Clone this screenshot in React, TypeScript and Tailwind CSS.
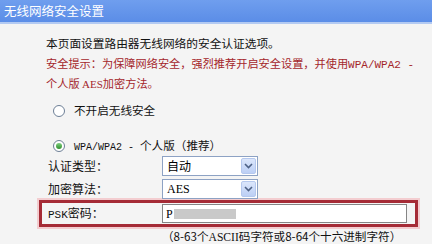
export default function App() {
  const cjk = "font-['Noto_Sans_CJK_SC',sans-serif]";
  const mono = "font-['Liberation_Mono','Noto_Sans_CJK_SC',monospace]";

  const Select = ({ value, latin }: { value: string; latin?: boolean }) => (
    <div className="flex h-[20px] w-[96px] items-stretch border border-[#8da2c4] bg-white">
      <span
        className={`flex-1 pl-[4px] text-[12px] leading-[18px] text-black ${latin ? "font-['Liberation_Serif',serif]" : cjk}`}
      >
        {value}
      </span>
      <span className="m-[1px] flex w-[15px] items-center justify-center rounded-[2px] border border-[#b5c8ee] bg-gradient-to-b from-[#dbe6fb] to-[#bccff5]">
        <svg width="9" height="6" viewBox="0 0 9 6">
          <path d="M1 1l3.5 3.5L8 1" fill="none" stroke="#4d6185" strokeWidth="1.6" />
        </svg>
      </span>
    </div>
  );

  const Radio = ({ checked }: { checked?: boolean }) => (
    <span className="flex h-[12px] w-[12px] items-center justify-center rounded-full border border-[#6d7f96] bg-white">
      {checked && <span className="h-[6px] w-[6px] rounded-full bg-gradient-to-b from-[#7fd07f] to-[#2d8f2d]" />}
    </span>
  );

  return (
    <div className={`h-[244px] w-[432px] overflow-hidden bg-[#f4f4f4] ${cjk}`}>
      <div className="h-[22px] bg-gradient-to-b from-[#6f9eee] to-[#5b8de7] pl-[4px] text-[12.5px] leading-[22px] text-white">
        无线网络安全设置
      </div>
      <div className="h-[2px] bg-[#b3caf2]" />

      <div className="pl-[46px] pt-[10px]">
        <div className="text-[11.7px] leading-[18px] text-[#111]">本页面设置路由器无线网络的安全认证选项。</div>
        <div className="mt-[2px] text-[11.2px] leading-[18px] text-[#a4262b]">
          安全提示：为保障网络安全，强烈推荐开启安全设置，并使用
          <span className={`${mono} text-[11px]`}>WPA/WPA2 -</span>
          <br />
          个人版 <span className="font-['Liberation_Serif',serif] text-[11px]">AES</span>加密方法。
        </div>
      </div>

      <div className="mt-[9px] flex h-[18px] items-center gap-[9px] pl-[53px] text-[11.6px] text-[#111]">
        <Radio />
        <span>不开启无线安全</span>
      </div>

      <div className="mt-[17px] flex h-[18px] items-center gap-[9px] pl-[53px] text-[11.6px] text-[#111]">
        <Radio checked />
        <span>
          <span className={`${mono} text-[10px]`}>WPA/WPA2 - </span>个人版（推荐）
        </span>
      </div>

      <div className="mt-[1px] grid grid-cols-[114px_auto] items-center gap-y-[3px] pl-[48px] text-[12px] text-[#111]">
        <span className="leading-[20px]">认证类型：</span>
        <Select value="自动" />
        <span className="leading-[20px]">加密算法：</span>
        <Select value="AES" latin />
      </div>

      <div className="ml-[39px] mt-[1px] flex h-[27px] w-[379px] items-center border-[3px] border-[#a52b36] pl-[6px] shadow-[0_0_0_2px_#f3cdd0] text-[12px] text-[#111]">
        <span className="w-[114px]">
          <span className={`${mono} text-[11px]`}>PSK</span>密码：
        </span>
        <div className="flex h-[19px] w-[245px] items-center border border-[#858585] bg-white pl-[3px]">
          <span className="font-['Liberation_Serif',serif] text-[12px] leading-none text-black">P</span>
          <span className="ml-[1px] h-[10px] w-[62px] bg-[#c9c9c9]" />
        </div>
      </div>

      <div className="pl-[162px] pt-[1px] text-[11.6px] leading-[16px] text-[#111]">
        （8-63个<span className="font-['Liberation_Serif',serif]">ASCII</span>码字符或8-64个十六进制字符）
      </div>
    </div>
  );
}
